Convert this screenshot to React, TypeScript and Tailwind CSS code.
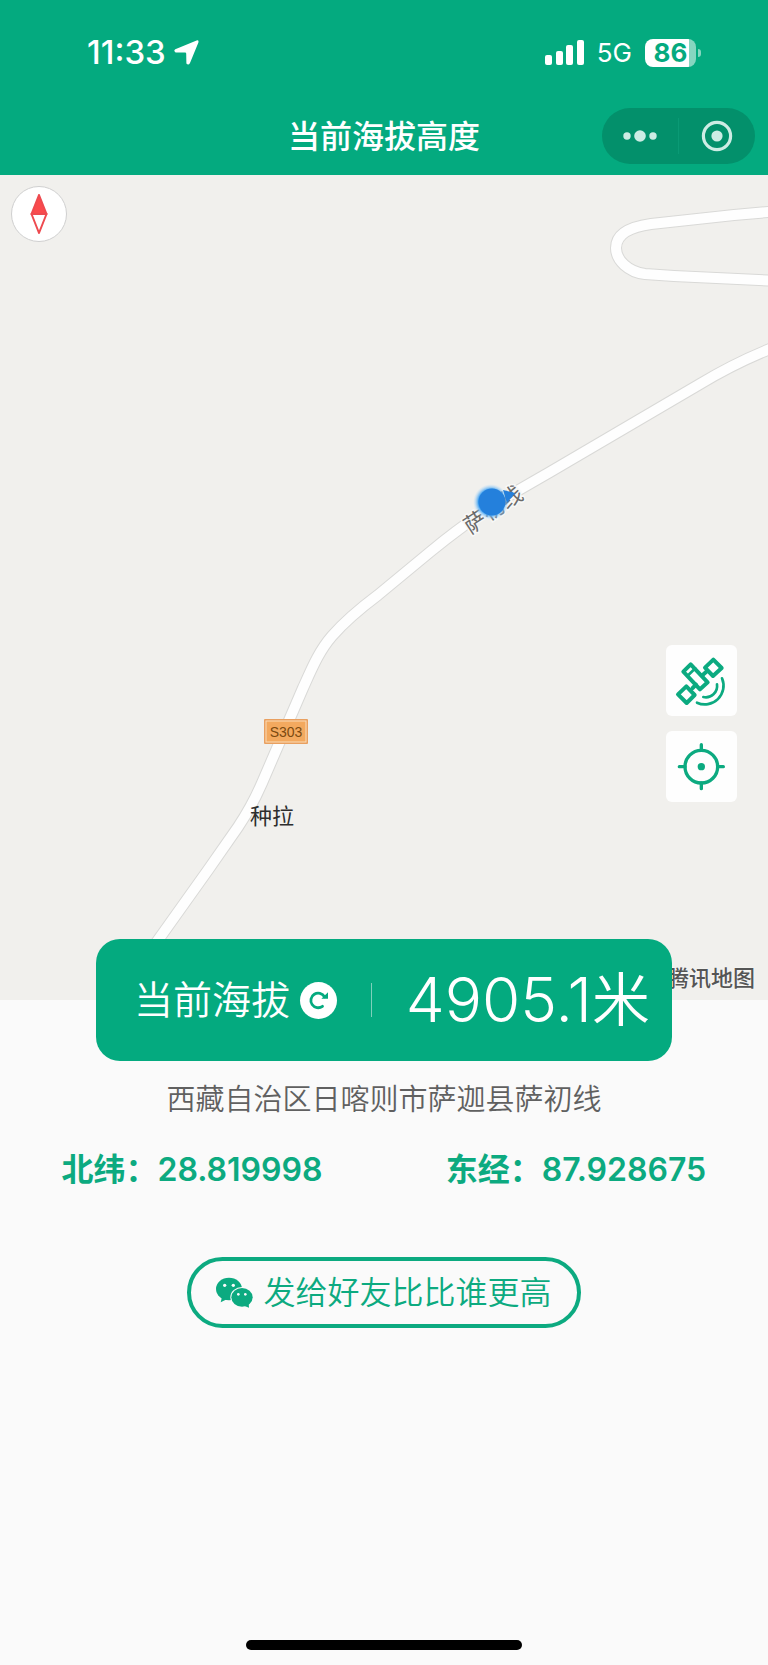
import type { ReactNode } from 'react'

interface Coordinate {
    label: string;
    value: string;
}

const coordinates: Coordinate[] = [
    { label: '北纬：', value: '28.819998' },
    { label: '东经：', value: '87.928675' },
]

const mainRoad =
    'M136 796 L208 695 L238 652 Q252 631 262 608 L303 513 C312 493 319 476 332 461 C346 445 362 432 378 420 L430 377 Q470 344 510 320 L550 297 L700 209 Q738 186 780 170'
const loopRoad =
    'M780 36 L734 40 L651 49 C629 52 616 59 616 73 C616 85 628 97 645 99 L674 101 L780 106'

function StatusBar() {
    return (
        <div className="flex h-[105px] items-center justify-between pl-[87px] pr-[67px]">
            <div className="flex items-center gap-2">
                <span className="text-[33px] font-medium leading-none">11:33</span>
                <svg width="25" height="25" viewBox="0 0 25 25" fill="currentColor">
                    <path d="M22.6 .4 Q25 -.2 24.4 2.4 L16 22.9 Q14.5 25.6 12.4 23.6 L12.2 13.6 Q12 12.7 11.2 12.6 L1.6 12.4 Q-.8 10.9 1.3 9.2 Z" />
                </svg>
            </div>
            <div className="flex items-center">
                <svg width="39" height="25" viewBox="0 0 39 25" fill="currentColor">
                    <rect x="0" y="15" width="7" height="10" rx="2" />
                    <rect x="11" y="11" width="7" height="14" rx="2" />
                    <rect x="21" y="5" width="7" height="20" rx="2" />
                    <rect x="32" y="0" width="7" height="25" rx="2" />
                </svg>
                <span className="mx-[13px] text-[26px] leading-none">5G</span>
                <div className="flex h-7 w-[51px] items-center justify-center rounded-lg bg-linear-to-r from-white from-86% to-[#86d6c0] to-86%">
                    <span className="text-[26px] font-bold leading-none text-[#04aa7f]">86</span>
                </div>
                <div className="ml-0.5 h-2 w-[3px] rounded-r-full bg-[#86d6c0]" />
            </div>
        </div>
    )
}

function TitleBar() {
    return (
        <div className="relative flex h-[70px] justify-center">
            <h1 className="mt-[9px] text-[32px] font-medium leading-[46px]">当前海拔高度</h1>
            <div className="absolute right-[13px] top-[3px] flex h-14 w-[153px] items-center rounded-full bg-[#03906b] text-[#cdece4]">
                <button type="button" aria-label="更多" className="flex h-full flex-1 items-center justify-center">
                    <svg width="34" height="12" viewBox="0 0 34 12" fill="currentColor">
                        <circle cx="4" cy="6" r="3.7" />
                        <circle cx="17" cy="6" r="5.8" />
                        <circle cx="30" cy="6" r="3.7" />
                    </svg>
                </button>
                <div className="h-9 w-px bg-[#0a9a75]" />
                <button type="button" aria-label="关闭" className="flex h-full flex-1 items-center justify-center">
                    <svg width="32" height="32" viewBox="0 0 32 32" fill="currentColor">
                        <circle cx="16" cy="16" r="13.6" fill="none" stroke="currentColor" strokeWidth="3.2" />
                        <circle cx="16" cy="16" r="5.6" />
                    </svg>
                </button>
            </div>
        </div>
    )
}

function MapDrawing() {
    return (
        <svg viewBox="0 0 768 825" className="block w-full">
            <defs>
                <radialGradient id="glow">
                    <stop offset="70%" stopColor="#3ea0f0" />
                    <stop offset="100%" stopColor="#bfe0fa" stopOpacity="0" />
                </radialGradient>
            </defs>
            {[loopRoad, mainRoad].map((road) => (
                <g key={road} fill="none" strokeLinejoin="round">
                    <path d={road} stroke="#d9d9d7" strokeWidth="12" />
                    <path d={road} stroke="#fefefe" strokeWidth="10" />
                </g>
            ))}

            {/* road name follows the slope of the road */}
            <g fontSize="22" fill="#6a6a6a" textAnchor="middle" stroke="#f8f8f7" strokeWidth="3" paintOrder="stroke">
                <text transform="translate(475 347) rotate(-33)" y="8">萨</text>
                <text transform="translate(493 334) rotate(-33)" y="8">初</text>
                <text transform="translate(511 322) rotate(-33)" y="8">线</text>
            </g>
            <circle cx="491" cy="327" r="18" fill="url(#glow)" />
            <path d="M503 315 L515 318 L507 328 Z" fill="#2480dc" />
            <circle cx="492" cy="327" r="13.5" fill="#2480dc" />

            <rect x="264" y="544" width="44" height="25" rx="1" fill="#e9a060" />
            <rect x="266" y="546" width="40" height="21" fill="#f3a95f" stroke="#fbdcb8" />
            <text x="286" y="562" fontSize="14" textAnchor="middle" fill="#7c4a10" className="font-['Liberation_Sans',sans-serif]">
                S303
            </text>
            <text x="250" y="649" fontSize="22" fill="#2e2e2e">种拉</text>
        </svg>
    )
}

function MapButton({ label, children }: { label: string; children: ReactNode }) {
    return (
        <button type="button" aria-label={label} className="size-[71px] rounded-md bg-[#fefefe] text-[#0caa80]">
            <svg viewBox="0 0 213 213" fill="none" stroke="currentColor" strokeLinecap="round" className="size-full">
                {children}
            </svg>
        </button>
    )
}

function MapPanel() {
    return (
        <section className="relative overflow-hidden bg-[#f1f0ed]">
            <MapDrawing />
            <button
                type="button"
                aria-label="指北针"
                className="absolute left-[11px] top-[11px] flex size-14 items-center justify-center rounded-full border border-[#d0d0d0] bg-white"
            >
                <svg width="18" height="40" viewBox="0 0 18 40" stroke="#ee4a4f" strokeWidth="2" strokeLinejoin="round">
                    <path d="M9 1 L1.500 20 H16.500 Z" fill="#fa4a4c" />
                    <path d="M1.500 20 L9 39 L16.500 20 Z" fill="white" />
                </svg>
            </button>
            <div className="absolute right-[31px] top-[57%] flex flex-col gap-[15px]">
                <MapButton label="卫星地图">
                    <g strokeWidth="12" strokeLinejoin="round">
                        <path d="M142 44 L167 69 L141 93 L117 68 Z" />
                        <path d="M61 124 L86 150 L62 174 L36 148 Z" />
                        <path d="M74 58 L125 112 L102 133 L52 80 Z" />
                    </g>
                    <path d="M64 93 L88 70" strokeWidth="8" />
                    <path d="M110 90 L121 80 M80 129 L90 119" strokeWidth="12" />
                    <path d="M168 100 A56 56 0 0 1 93 173" strokeWidth="8" />
                    <path d="M153 118 A34 34 0 0 1 112 156" strokeWidth="8" />
                </MapButton>
                <MapButton label="定位">
                    <circle cx="106" cy="107" r="49" strokeWidth="10" />
                    <path d="M106 41 V58 M106 156 V173 M40 107 H57 M155 107 H172" strokeWidth="10" />
                    <circle cx="106" cy="107" r="11" fill="currentColor" stroke="none" />
                </MapButton>
            </div>
            <span className="absolute bottom-[9px] right-[13px] text-[22px] font-medium leading-[26px] text-[#555] [text-shadow:0_0_2px_white]">
                腾讯地图
            </span>
        </section>
    )
}

function AltitudeCard() {
    return (
        <div className="relative mx-24 -mt-[61px] flex h-[122px] items-center justify-between rounded-3xl bg-[#04aa7f] pl-[38px] pr-[22px] text-white">
            <div className="flex items-center gap-[10px]">
                <span className="text-[39px] font-[350] leading-[42px]">当前海拔</span>
                <button type="button" aria-label="刷新" className="flex size-[37px] items-center justify-center rounded-full bg-white text-[#04aa7f]">
                    <svg width="22" height="22" viewBox="0 0 22 22" fill="none" stroke="currentColor" strokeWidth="2.8">
                        <path d="M14.500 17.300 A7.300 7.300 0 1 1 16.500 7.800" strokeLinecap="round" />
                        <path d="M20 3.200 V9.800 H13.400 Z" fill="currentColor" stroke="none" />
                    </svg>
                </button>
            </div>
            <div className="h-[34px] w-px bg-[#7fd0bb]" />
            <p className="flex items-center leading-[60px]">
                <span className="text-[62px] font-light">4905.1</span>
                <span className="text-[58px] font-[350]">米</span>
            </p>
        </div>
    )
}

function WechatIcon() {
    return (
        <svg width="37" height="32" viewBox="0 0 111 96" fill="currentColor">
            <ellipse cx="39" cy="36" rx="39" ry="34" />
            <path d="M18 60 L14 76 L34 66 Z" />
            <ellipse cx="78" cy="61" rx="35" ry="31" fill="#fafafa" />
            <ellipse cx="78" cy="61" rx="32" ry="28" />
            <path d="M84 86 L99 92 L98 78 Z" />
            <g fill="#fafafa">
                <circle cx="26" cy="25" r="5" />
                <circle cx="52" cy="25" r="5" />
                <circle cx="67" cy="52" r="4" />
                <circle cx="88" cy="52" r="4" />
            </g>
        </svg>
    )
}

export default function App() {
    return (
        <div className="flex min-h-screen flex-col bg-[#fafafa] font-['Inter','Noto_Sans_CJK_SC',sans-serif]" lang="zh-CN">
            <header className="bg-[#04aa7f] text-white">
                <StatusBar />
                <TitleBar />
            </header>
            <main>
                <MapPanel />
                <AltitudeCard />
                <p className="mt-[18px] text-center text-[29px] font-[350] leading-[42px] text-[#606060]">
                    西藏自治区日喀则市萨迦县萨初线
                </p>
                <dl className="mt-[25px] grid grid-cols-2 text-[32px] font-semibold leading-[48px] text-[#0caa80]">
                    {coordinates.map((item) => (
                        <div key={item.label} className="flex justify-center">
                            <dt>{item.label}</dt>
                            <dd>{item.value}</dd>
                        </div>
                    ))}
                </dl>
                <button
                    type="button"
                    className="mx-auto mt-[63px] flex h-[71px] items-center gap-[10px] rounded-full border-4 border-[#0caa80] px-[25px] text-[32px] font-[350] text-[#0caa80]"
                >
                    <WechatIcon />
                    发给好友比比谁更高
                </button>
            </main>
            <div className="mx-auto mb-[15px] mt-auto h-[10px] w-[276px] rounded-full bg-black" />
        </div>
    )
}
